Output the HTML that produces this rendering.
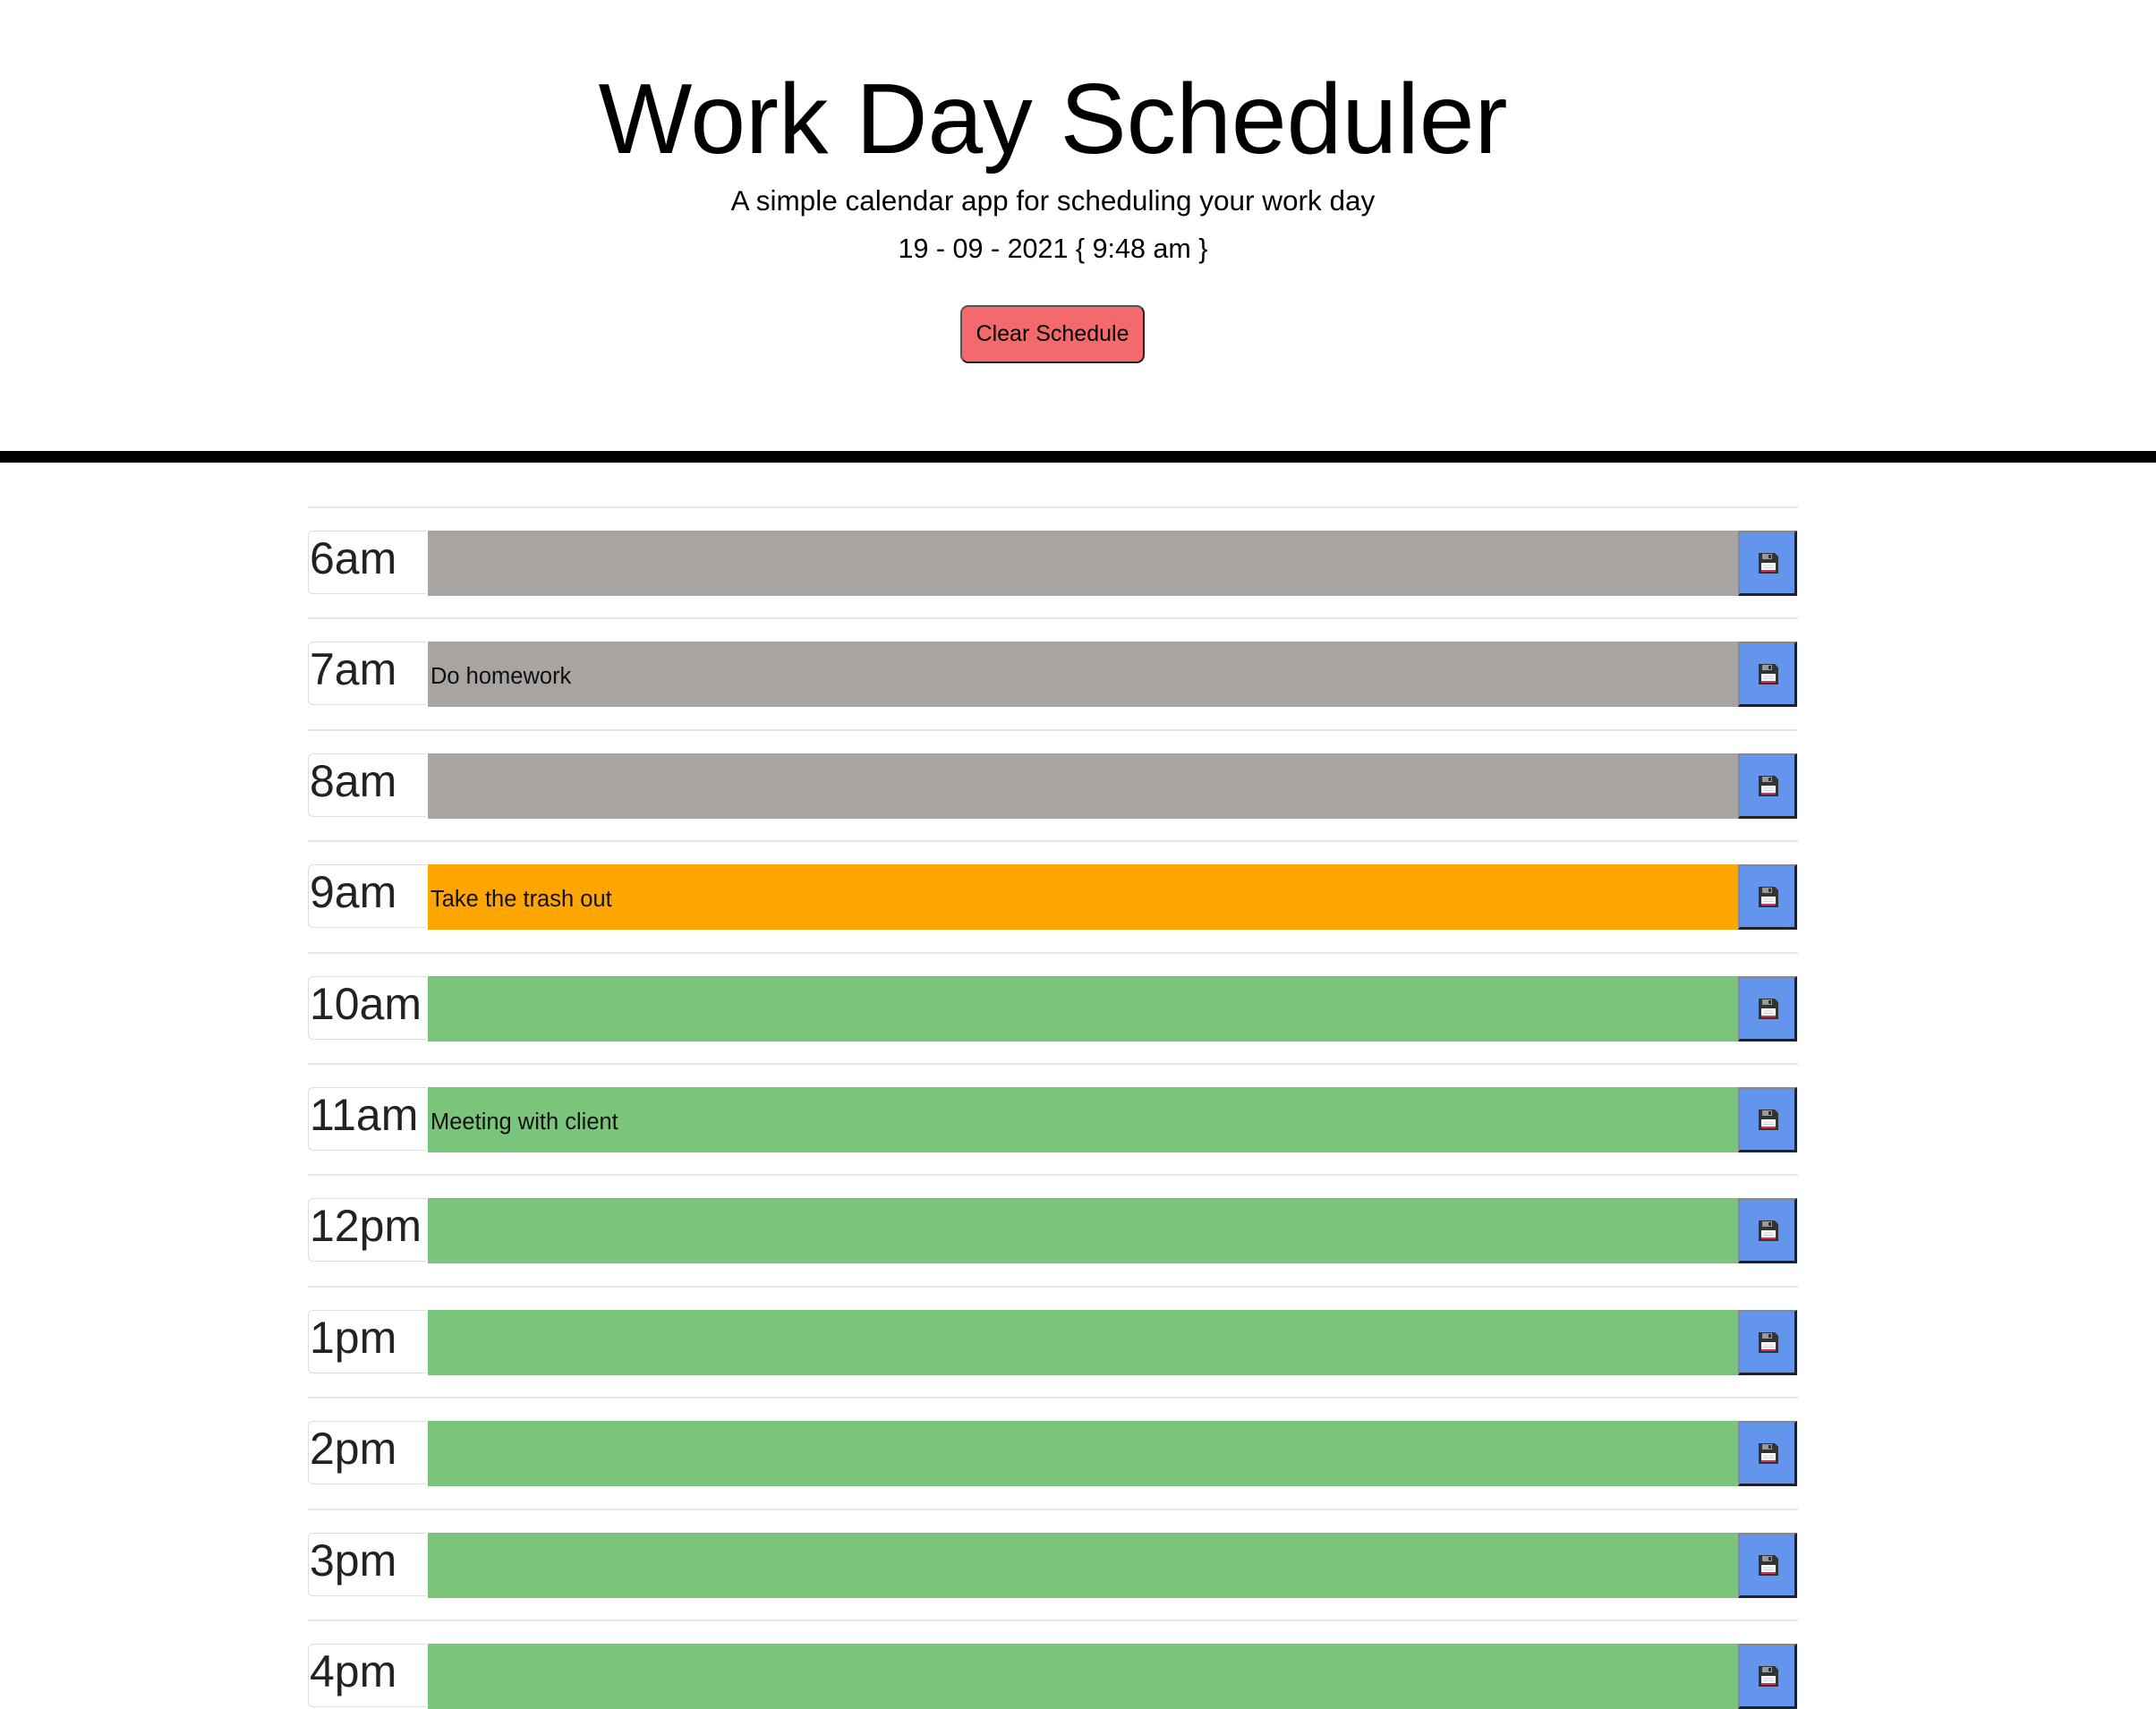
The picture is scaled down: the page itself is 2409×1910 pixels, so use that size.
<!DOCTYPE html>
<html><head><meta charset="utf-8"><style>
body{margin:0;width:2409px;height:1897px;overflow:hidden;background:#fff;font-family:"Liberation Sans",sans-serif;color:#000;position:relative}
.t{position:absolute;left:0;width:2353px;text-align:center;white-space:nowrap}
#title{top:68px;font-size:111px;line-height:130px}
#sub{top:204px;font-size:31.5px;line-height:40px}
#date{top:258px;font-size:30.5px;line-height:40px}
#btn{position:absolute;left:1073px;top:341px;width:202px;height:61px;background:#f4696b;border:2px solid #555;border-right-color:#222;border-bottom-color:#222;border-radius:9px;font-size:25px;line-height:61px;text-align:center}
#bar{position:absolute;left:0;top:504px;width:2409px;height:13px;background:#000}
.hr{position:absolute;left:344px;width:1665px;height:2px;background:#e8e8e8}
.lab{position:absolute;left:344px;width:132px;height:71px;border:1.5px solid #ddd;border-right:none;border-radius:6px 0 0 6px;font-size:50px;line-height:60px;color:#222;padding-left:1px;box-sizing:border-box}
.in{position:absolute;left:478px;width:1464px;height:73px;font-size:25.5px;line-height:78px;padding-left:3px;box-sizing:border-box;color:#111}
.sv{position:absolute;left:1942px;width:66px;height:73px;background:#6495ed;border-left:2px solid #888;border-top:2px solid #888;border-right:3px solid #222;border-bottom:3px solid #222;box-sizing:border-box}
.sv svg{position:absolute;left:19px;top:22px}
.g{background:#a8a4a2}.o{background:#ffa500}.n{background:#7bc47b}
</style></head><body>
<div class="t" id="title">Work Day Scheduler</div>
<div class="t" id="sub">A simple calendar app for scheduling your work day</div>
<div class="t" id="date">19 - 09 - 2021 { 9:48 am }</div>
<div id="btn">Clear Schedule</div>
<div id="bar"></div>
<div id="rows"></div>
<script>
var rows=[["6am","g",""],["7am","g","Do homework"],["8am","g",""],["9am","o","Take the trash out"],["10am","n",""],["11am","n","Meeting with client"],["12pm","n",""],["1pm","n",""],["2pm","n",""],["3pm","n",""],["4pm","n",""]];
var h="";
var ic='<svg width="25" height="25" viewBox="0 0 25 25"><path d="M2 1h18l4 4v19H2z" fill="#333"/><rect x="6" y="2" width="11" height="6" fill="#999"/><rect x="13" y="3" width="3" height="4" fill="#333"/><rect x="5" y="12" width="16" height="10" fill="#fff"/><rect x="5" y="20" width="16" height="2" fill="#d0306a"/><path d="M7 15h12M7 17.5h12" stroke="#ccc" stroke-width="1"/></svg>';
rows.forEach(function(r,i){var y=Math.round(593+124.4*i);
h+='<div class="hr" style="top:'+(y-27)+'px"></div><div class="lab" style="top:'+y+'px">'+r[0]+'</div><div class="in '+r[1]+'" style="top:'+y+'px">'+r[2]+'</div><div class="sv" style="top:'+y+'px">'+ic+'</div>';});
document.getElementById("rows").innerHTML=h;
</script>
</body></html>
